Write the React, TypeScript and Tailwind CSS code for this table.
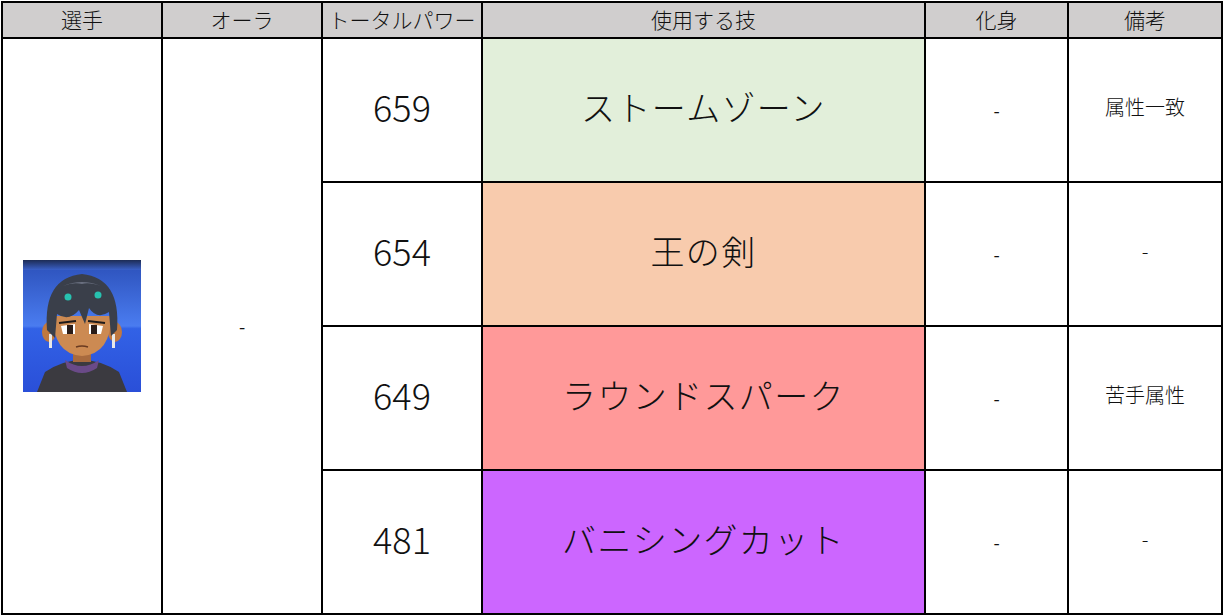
import React from "react";

const FONT = { fontFamily: '"Noto Sans CJK JP", "Noto Sans", sans-serif' };

const ROWS = [
  { power: "659", move: "ストームゾーン", bg: "bg-[#e2efda]", avatar: "-", note: "属性一致" },
  { power: "654", move: "王の剣", bg: "bg-[#f8cbad]", avatar: "-", note: "-" },
  { power: "649", move: "ラウンドスパーク", bg: "bg-[#ff9999]", avatar: "-", note: "苦手属性" },
  { power: "481", move: "バニシングカット", bg: "bg-[#cc66ff]", avatar: "-", note: "-" },
];

const HEADERS = ["選手", "オーラ", "トータルパワー", "使用する技", "化身", "備考"];

function Avatar() {
  return (
    <svg width="118" height="132" viewBox="0 0 118 132">
      <defs>
        <linearGradient id="bgGrad" x1="0" y1="0" x2="0" y2="1">
          <stop offset="0" stopColor="#2b4fb8" />
          <stop offset="0.5" stopColor="#4a7cf0" />
          <stop offset="0.52" stopColor="#3262e6" />
          <stop offset="1" stopColor="#2a4fd8" />
        </linearGradient>
        <linearGradient id="topBand" x1="0" y1="0" x2="0" y2="1">
          <stop offset="0" stopColor="#1d2c55" />
          <stop offset="1" stopColor="#3a60c8" />
        </linearGradient>
      </defs>
      <rect width="118" height="132" fill="url(#bgGrad)" />
      <rect width="118" height="10" fill="url(#topBand)" />
      {/* body */}
      <path d="M14 132 L22 112 Q40 100 59 100 Q78 100 96 112 L104 132 Z" fill="#3b3a40" />
      <path d="M42 100 Q59 112 76 100 L74 108 Q59 118 44 108 Z" fill="#6a4a88" />
      {/* neck */}
      <rect x="50" y="88" width="18" height="14" fill="#a86a3e" />
      {/* ears */}
      <ellipse cx="26" cy="72" rx="7" ry="10" fill="#c07840" />
      <ellipse cx="92" cy="72" rx="7" ry="10" fill="#c07840" />
      <rect x="26" y="74" width="3" height="14" fill="#e8e8e8" />
      <rect x="89" y="74" width="3" height="14" fill="#e8e8e8" />
      {/* face */}
      <path d="M30 56 Q30 94 59 96 Q88 94 88 56 Z" fill="#cc8a52" />
      {/* hair */}
      <path d="M24 70 Q20 18 59 14 Q98 18 94 70 L88 76 L86 52 Q74 60 66 48 L62 64 L56 50 Q46 62 34 54 L32 78 Z" fill="#3a3f4a" />
      <path d="M40 26 Q59 18 78 26 Q66 22 59 24 Q50 22 40 26 Z" fill="#6a7080" />
      <circle cx="45" cy="37" r="3.5" fill="#27c2b0" />
      <circle cx="75" cy="35" r="3.5" fill="#27c2b0" />
      {/* eyes */}
      <path d="M38 66 L52 64 L52 74 L40 74 Z" fill="#ffffff" />
      <path d="M66 64 L80 66 L78 74 L66 74 Z" fill="#ffffff" />
      <rect x="44" y="65" width="6" height="9" fill="#2a1c18" />
      <rect x="68" y="65" width="6" height="9" fill="#2a1c18" />
      <path d="M36 63 L53 61" stroke="#1e1a1a" strokeWidth="2" />
      <path d="M65 61 L82 63" stroke="#1e1a1a" strokeWidth="2" />
      <path d="M53 87 Q59 85 65 87" stroke="#6a3a20" strokeWidth="1.5" fill="none" />
    </svg>
  );
}

function Cell({ children, className = "", bg = "bg-white" }: { children?: React.ReactNode; className?: string; bg?: string }) {
  return <div className={`flex items-center justify-center ${bg} ${className}`}>{children}</div>;
}

export default function App() {
  return (
    <div className="h-[616px] w-[1225px] bg-white" style={FONT}>
      <div className="ml-px mt-px grid w-[1222px] grid-cols-[158px_158px_158px_441px_141px_152px] grid-rows-[34px_142px_142px_142px_142px] gap-[2px] bg-black p-[2px] text-[#111]">
        {HEADERS.map((h) => (
          <div key={h} className="flex items-center justify-center bg-[#d0cece] text-[21px] font-light">
            {h}
          </div>
        ))}

        <Cell className="row-span-4">
          <Avatar />
        </Cell>
        <Cell className="row-span-4 text-[18px]">-</Cell>

        {ROWS.map((r, i) => (
          <React.Fragment key={i}>
            <Cell className="pb-[8px] text-[36px] font-light">{r.power}</Cell>
            <Cell bg={r.bg} className="pb-[8px] text-[34px] font-light tracking-[0.04em]">{r.move}</Cell>
            <Cell className="text-[18px]">{r.avatar}</Cell>
            <Cell className="pb-[6px] text-[20px] font-light">{r.note}</Cell>
          </React.Fragment>
        ))}
      </div>
    </div>
  );
}
